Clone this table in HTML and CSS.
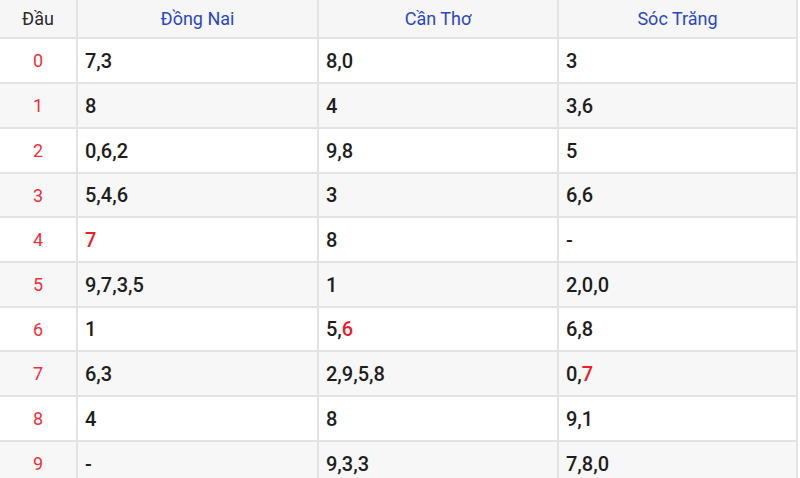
FILE: index.html
```html
<!DOCTYPE html>
<html lang="vi">
<head>
<meta charset="utf-8">
<title>Đầu</title>
<link rel="stylesheet" href="styles.css">
</head>
<body>
<table class="loto">
  <colgroup>
    <col class="c-head">
    <col class="c-prov">
    <col class="c-prov2">
    <col class="c-prov3">
  </colgroup>
  <thead>
    <tr class="hdr">
      <th class="h-dau">Đầu</th>
      <th class="h-prov">Đồng Nai</th>
      <th class="h-prov">Cần Thơ</th>
      <th class="h-prov">Sóc Trăng</th>
    </tr>
  </thead>
  <tbody>
    <tr><td class="num">0</td><td>7,3</td><td>8,0</td><td>3</td></tr>
    <tr><td class="num">1</td><td>8</td><td>4</td><td>3,6</td></tr>
    <tr><td class="num">2</td><td>0,6,2</td><td>9,8</td><td>5</td></tr>
    <tr class="short"><td class="num">3</td><td>5,4,6</td><td>3</td><td>6,6</td></tr>
    <tr><td class="num">4</td><td><span class="hl">7</span></td><td>8</td><td>-</td></tr>
    <tr><td class="num">5</td><td>9,7,3,5</td><td>1</td><td>2,0,0</td></tr>
    <tr class="short"><td class="num">6</td><td>1</td><td>5,<span class="hl">6</span></td><td>6,8</td></tr>
    <tr><td class="num">7</td><td>6,3</td><td>2,9,5,8</td><td>0,<span class="hl">7</span></td></tr>
    <tr><td class="num">8</td><td>4</td><td>8</td><td>9,1</td></tr>
    <tr><td class="num">9</td><td>-</td><td>9,3,3</td><td>7,8,0</td></tr>
  </tbody>
</table>
</body>
</html>
```
FILE: styles.css
```css
html, body {
  margin: 0;
  padding: 0;
  background: #ffffff;
}
body {
  font-family: Roboto, "Liberation Sans", Arial, sans-serif;
  overflow: hidden;
}
.loto {
  width: 798px;
  table-layout: fixed;
  border-collapse: separate;
  border-spacing: 0;
}
.c-head { width: 78px; }
.c-prov { width: 241px; }
.c-prov2 { width: 240px; }
.c-prov3 { width: 239px; }
.loto th,
.loto td {
  border-right: 2px solid #e3e3e6;
  border-bottom: 2px solid #e3e3e6;
  padding: 0;
  vertical-align: middle;
}
.hdr {
  height: 39px;
  background: #f6f6f6;
}
.loto th {
  font-weight: 400;
  font-size: 18px;
  text-align: center;
  color: #2c47c0;
}
.loto th.h-dau {
  color: #2a2a2a;
}
.loto tbody tr {
  height: 45px;
}
.loto tbody tr.short {
  height: 44px;
}
.loto tbody tr:nth-child(even) {
  background: #f7f7f7;
}
.loto td {
  padding-left: 7px;
  font-size: 20px;
  font-weight: 500;
  color: #1e1e1e;
}
.loto td.num {
  padding-left: 0;
  text-align: center;
  font-size: 18px;
  font-weight: 400;
  color: #ee2f3c;
}
.hl {
  color: #ee1c25;
}
```
